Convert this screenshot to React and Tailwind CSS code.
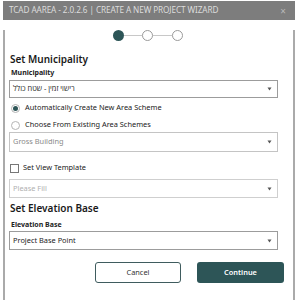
import React from "react";

const font = { fontFamily: '"Noto Sans", "Open Sans", sans-serif' };
const heb = { fontFamily: '"Noto Sans", "Open Sans", "Noto Sans Hebrew", "DejaVu Sans", sans-serif' };

function Caret() {
  return (
    <svg width="5" height="4" viewBox="0 0 5 4" className="shrink-0">
      <path d="M0.5 0.5 L4.5 0.5 L2.5 3.5 Z" fill="#555" />
    </svg>
  );
}

function Select({ children, h, border, textColor, dir }) {
  return (
    <div
      className={`flex items-center justify-between w-[269px] border bg-white pl-[3px] pr-[5px] ${h} ${border}`}
    >
      <span className={`text-[7.4px] leading-none ${textColor}`} dir={dir} style={dir ? heb : font}>
        {children}
      </span>
      <Caret />
    </div>
  );
}

export default function App() {
  return (
    <div className="w-[297px] h-[300px] bg-white pt-[1px] pl-[3px]" style={font}>
      <div className="w-[292px]">
        <div className="h-[19px] bg-[#7d7d7d] flex items-center justify-between pl-[6px] pr-[9px]">
          <span className="text-[8.2px] text-[#dcdcdc] leading-none tracking-[-0.1px]">
            TCAD AAREA - 2.0.2.6 | CREATE A NEW PROJECT WIZARD
          </span>
          <span className="text-[10px] text-[#b8b8b8] leading-none">×</span>
        </div>
        <div className="h-[275px] border-x-2 border-b-2 border-[#aaaaaa] pl-[4px]">
          <div className="mt-[10px] h-[11px] flex items-center pl-[104px]">
            <div className="w-[11px] h-[11px] rounded-full bg-[#2d5557]" />
            <div className="w-[18px] h-px bg-[#c8c8c8]" />
            <div className="w-[11px] h-[11px] rounded-full border border-[#9a9a9a] bg-white" />
            <div className="w-[19px] h-px bg-[#c8c8c8]" />
            <div className="w-[11px] h-[11px] rounded-full border border-[#9a9a9a] bg-white" />
          </div>
          <div className="mt-[11px] h-[14px] flex items-center pl-[1px] text-[10px] font-semibold text-[#1a1a1a] leading-none">
            Set Municipality
          </div>
          <div className="mt-[1px] h-[10px] flex items-center pl-[2px] text-[7px] font-bold text-[#222] leading-none">
            Municipality
          </div>
          <div className="mt-[3px]">
            <Select h="h-[18px]" border="border-[#9c9c9c]" textColor="text-[#222]" dir="rtl">
              רישוי זמין - שטח כולל
            </Select>
          </div>
          <div className="mt-[4px] h-[12px] flex items-center pl-[2px] gap-[5px]">
            <div className="w-[9px] h-[9px] rounded-full border border-[#b5b5b5] flex items-center justify-center">
              <div className="w-[5px] h-[5px] rounded-full bg-[#2d5557]" />
            </div>
            <span className="text-[7.4px] text-[#222] leading-none">Automatically Create New Area Scheme</span>
          </div>
          <div className="mt-[5px] h-[12px] flex items-center pl-[2px] gap-[5px]">
            <div className="w-[9px] h-[9px] rounded-full border border-[#b5b5b5]" />
            <span className="text-[7.4px] text-[#222] leading-none">Choose From Existing Area Schemes</span>
          </div>
          <div className="mt-[1px]">
            <Select h="h-[20px]" border="border-[#c4c4c4]" textColor="text-[#8a8a8a]">
              Gross Building
            </Select>
          </div>
          <div className="mt-[10px] h-[12px] flex items-center pl-[1px] gap-[4px]">
            <div className="w-[9px] h-[9px] border border-[#777]" />
            <span className="text-[7.4px] text-[#222] leading-none">Set View Template</span>
          </div>
          <div className="mt-[5px]">
            <Select h="h-[19px]" border="border-[#cfcfcf]" textColor="text-[#b0b0b0]">
              Please Fill
            </Select>
          </div>
          <div className="mt-[3px] h-[14px] flex items-center pl-[1px] text-[10px] font-semibold text-[#1a1a1a] leading-none">
            Set Elevation Base
          </div>
          <div className="mt-[4px] h-[10px] flex items-center pl-[2px] text-[7px] font-bold text-[#222] leading-none">
            Elevation Base
          </div>
          <div className="mt-[2px]">
            <Select h="h-[19px]" border="border-[#9c9c9c]" textColor="text-[#222]">
              Project Base Point
            </Select>
          </div>
          <div className="mt-[12px] w-[275px] flex justify-end gap-[16px]">
            <button className="w-[86px] h-[21px] rounded-[3px] border border-[#3f5c5e] bg-white text-[7.4px] text-[#333] leading-none">
              Cancel
            </button>
            <button className="w-[87px] h-[21px] rounded-[3px] bg-[#2d5557] text-[7.4px] font-semibold text-white leading-none">
              Continue
            </button>
          </div>
        </div>
      </div>
    </div>
  );
}
